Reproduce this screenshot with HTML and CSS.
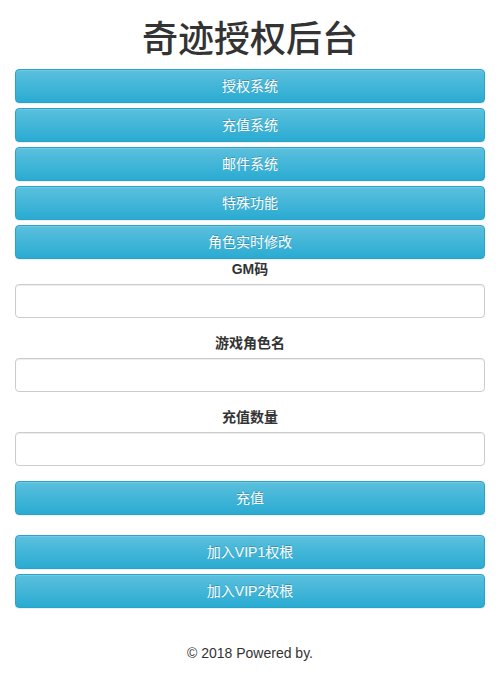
FILE: index.html
```html
<!DOCTYPE html>
<html lang="zh-CN">
<head>
    <meta charset="UTF-8">
    <meta name="viewport" content="width=device-width, initial-scale=1.0">
    <title>奇迹授权后台</title>
    <link rel="stylesheet" href="styles.css">
</head>
<body>

<div class="container">
    <h1 class="title">奇迹授权后台</h1>

    <!-- Menu buttons -->
    <div class="menu">
        <button type="button" class="btn">授权系统</button>
        <button type="button" class="btn">充值系统</button>
        <button type="button" class="btn">邮件系统</button>
        <button type="button" class="btn">特殊功能</button>
        <button type="button" class="btn">角色实时修改</button>
    </div>

    <form id="payForm" class="pay-form">
        <div class="form-group">
            <label for="gmcode">GM码</label>
            <input type="text" id="gmcode" name="gmcode">
        </div>
        <div class="form-group">
            <label for="rolename">游戏角色名</label>
            <input type="text" id="rolename" name="rolename">
        </div>
        <div class="form-group">
            <label for="amount">充值数量</label>
            <input type="text" id="amount" name="amount">
        </div>
        <button type="button" class="btn">充值</button>
    </form>

    <div class="vip">
        <button type="button" class="btn">加入VIP1权根</button>
        <button type="button" class="btn">加入VIP2权根</button>
    </div>

    <footer class="footer">
        <p>&copy; 2018 Powered by.</p>
    </footer>
</div>

</body>
</html>
```

FILE: styles.css
```css
/* Global styles */
* {
    box-sizing: border-box;
}

body {
    margin: 0;
    font-family: "Liberation Sans", "Noto Sans CJK SC", sans-serif;
    font-size: 14px;
    line-height: 20px;
    color: #333;
    background: #fff;
}

.container {
    padding: 0 15px;
}

.title {
    margin: 20px 0 9px;
    font-size: 36px;
    line-height: 40px;
    font-weight: 500;
    text-align: center;
}

.btn {
    display: block;
    width: 100%;
    height: 34px;
    padding: 6px 12px;
    margin-bottom: 5px;
    font-family: inherit;
    font-size: 14px;
    line-height: 20px;
    color: #fff;
    text-shadow: 0 -1px 0 rgba(0, 0, 0, 0.2);
    background-image: linear-gradient(to bottom, #5bc0de 0%, #2aabd2 100%);
    border: 1px solid #28a4c9;
    border-radius: 4px;
    box-shadow: inset 0 1px 0 rgba(255, 255, 255, 0.15), 0 1px 1px rgba(0, 0, 0, 0.075);
    cursor: pointer;
}

.menu .btn:last-child {
    margin-bottom: 0;
}

.form-group {
    margin-bottom: 15px;
    text-align: center;
}

.form-group label {
    display: block;
    height: 20px;
    margin-bottom: 5px;
    font-weight: bold;
}

.form-group input {
    display: block;
    width: 100%;
    height: 34px;
    padding: 6px 12px;
    font-size: 14px;
    color: #555;
    background: #fff;
    border: 1px solid #ccc;
    border-radius: 4px;
    box-shadow: inset 0 1px 1px rgba(0, 0, 0, 0.075);
}

.pay-form .btn {
    margin-bottom: 20px;
}

.footer {
    padding-top: 30px;
    text-align: center;
}

.footer p {
    margin: 0;
}
```
